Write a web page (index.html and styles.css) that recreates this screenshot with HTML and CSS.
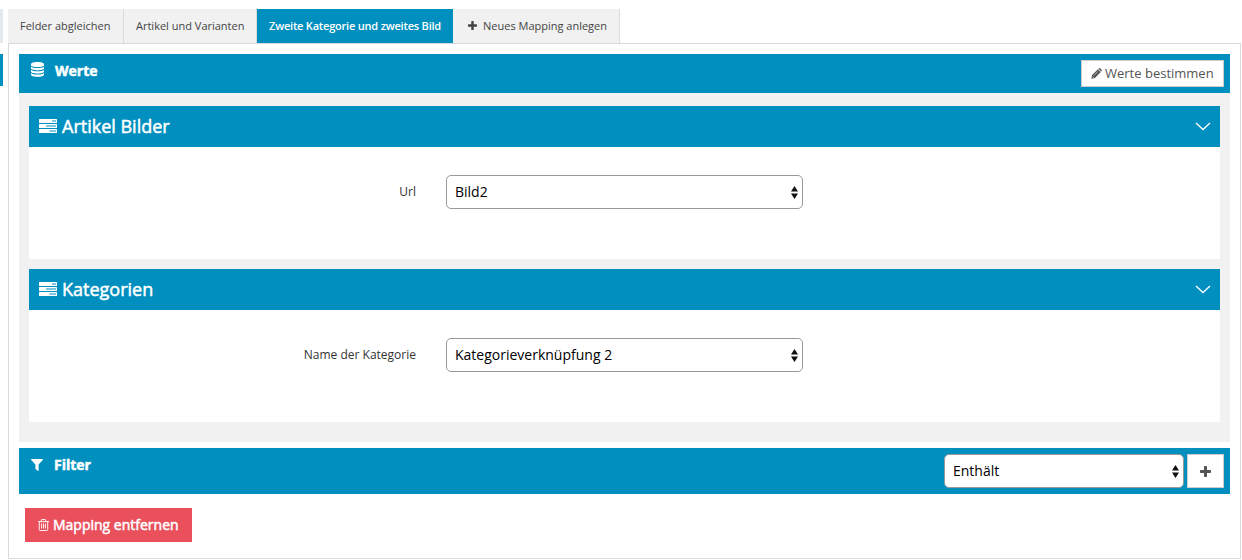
FILE: index.html
```html
<!DOCTYPE html>
<html lang="de">
<head>
<meta charset="utf-8">
<title>Mapping</title>
<link rel="stylesheet" href="styles.css">
</head>
<body>
<svg class="defs" width="0" height="0" aria-hidden="true">
  <symbol id="tasks" viewBox="0 0 18 14"><path fill="currentColor" fill-rule="evenodd" d="M.6 0h16.8q.6 0 .6.6v2.800q0 .6-.6.6H.6Q0 4 0 3.400V.6Q0 0 .6 0zM13 1.400v1.200h4V1.400zM.6 5h16.800q.6 0 .6.6v2.800q0 .6-.6.6H.6Q0 9 0 8.400V5.600Q0 5 .6 5zM7 6.400v1.200h10V6.400zM.6 10h16.800q.6 0 .6.6v2.800q0 .6-.6.6H.6q-.6 0-.6-.6v-2.800Q0 10 .6 10zM10.500 11.400v1.200H17v-1.200z"/></symbol>
  <symbol id="chevron" viewBox="0 0 16 9"><path fill="none" stroke="currentColor" stroke-width="1.300" d="M1 1l7 6.500L15 1"/></symbol>
  <symbol id="plus" viewBox="0 0 11 11"><path fill="currentColor" d="M4.700 0h1.600q.7 0 .7.7V4h3.300q.7 0 .7.700v1.600q0 .7-.7.700H7v3.300q0 .7-.7.700H4.700q-.7 0-.7-.7V7H.7Q0 7 0 6.300V4.700Q0 4 .7 4H4V.7Q4 0 4.700 0z"/></symbol>
  <symbol id="sort" viewBox="0 0 7 13"><path fill="#111" d="M3.500 0L7 5.500H0zM0 7.500h7L3.500 13z"/></symbol>
</svg>
<div class="page">
  <aside class="edge"><div class="edge-tab"></div><div class="edge-bar"></div></aside>
  <main class="main">
    <nav class="tabs">
      <a class="tab tab-1">Felder abgleichen</a>
      <a class="tab tab-2">Artikel und Varianten</a>
      <a class="tab tab-3 active">Zweite Kategorie und zweites Bild</a>
      <a class="tab tab-4"><svg class="tab-plus"><use href="#plus"/></svg>Neues Mapping anlegen</a>
    </nav>
    <section class="panel">
      <header class="bar values-bar">
        <svg class="db" viewBox="0 0 13 15"><path fill="currentColor" d="M0 2.200C0 .9 2.700 0 6.500 0S13 .9 13 2.200v1C13 4.300 10.300 5 6.500 5S0 4.300 0 3.200zM0 4.500c1 1.100 3.500 1.500 6.500 1.500S13 5.600 13 4.500v1.700C13 7.500 10.300 8.200 6.500 8.200S0 7.500 0 6.200zM0 7.700c1 1.100 3.500 1.500 6.500 1.500S13 8.800 13 7.700v1.700c0 1.300-2.700 2-6.500 2S0 10.700 0 9.400zM0 10.900c1 1.100 3.500 1.500 6.500 1.500s5.500-.4 6.500-1.500v1.700c0 1.400-2.700 2.400-6.500 2.400S0 14 0 12.600z"/></svg>
        <h2 class="bar-title">Werte</h2>
        <button class="btn define"><svg class="pencil" viewBox="0 0 12 12"><path fill="currentColor" d="M.3 11.700l.9-4L7.600 1.300l3.100 3.100-6.400 6.400zM8.200.8l.5-.5q.6-.5 1.200 0l1.800 1.800q.5.600 0 1.200l-.5.500z"/><path stroke="#fff" stroke-width=".6" fill="none" d="M3 8.300l4.700-4.700M1.300 9.100l1.600 1.600"/></svg><span>Werte bestimmen</span></button>
      </header>
      <div class="group">
        <section class="card">
          <header class="card-head"><svg class="tasks"><use href="#tasks"/></svg><h3 class="card-title">Artikel Bilder</h3><svg class="chevron"><use href="#chevron"/></svg></header>
          <div class="card-body"><label class="label">Url</label><div class="select field"><span>Bild2</span><svg class="sort"><use href="#sort"/></svg></div></div>
        </section>
        <section class="card">
          <header class="card-head"><svg class="tasks"><use href="#tasks"/></svg><h3 class="card-title">Kategorien</h3><svg class="chevron"><use href="#chevron"/></svg></header>
          <div class="card-body"><label class="label">Name der Kategorie</label><div class="select field"><span>Kategorieverknüpfung 2</span><svg class="sort"><use href="#sort"/></svg></div></div>
        </section>
      </div>
      <header class="bar filter-bar">
        <svg class="funnel" viewBox="0 0 12 12"><path fill="currentColor" d="M.5 0h11q.8.300.3 1L7.600 5.400v6q-.2.900-1 .4L4.600 10q-.2-.2-.2-.5V5.400L.2 1Q-.3.300.5 0z"/></svg>
        <h2 class="bar-title">Filter</h2>
        <div class="select operator"><span>Enthält</span><svg class="sort"><use href="#sort"/></svg></div>
        <button class="btn add"><svg class="add-plus"><use href="#plus"/></svg></button>
      </header>
      <button class="remove"><svg class="trash" viewBox="0 0 11 12"><path fill="none" stroke="currentColor" stroke-width=".9" d="M0 2.600h11M3.300 2.600V1q0-.5.500-.5h3.400q.5 0 .5.500v1.600M1.300 2.600v8q0 .9.900.9h6.600q.9 0 .9-.9v-8M3.600 4.500v5M5.500 4.500v5M7.400 4.500v5"/></svg><span>Mapping entfernen</span></button>
    </section>
  </main>
</div>
</body>
</html>
```
FILE: styles.css
```css
* { box-sizing: border-box; }
body { margin: 0; background: #fff; font-family: "Open Sans", sans-serif; color: #333; }
svg { display: block; flex: none; }
.defs { position: absolute; }
.page { display: flex; gap: 5px; padding-top: 9px; height: 560px; overflow: hidden; }
.edge { width: 3px; display: flex; flex-direction: column; gap: 11px; }
.edge-tab { height: 34px; background: #e2e8ee; }
.edge-bar { height: 32px; background: #008fbe; }
.main { width: 1233px; }
.tabs { display: flex; height: 34px; }
.tab { display: flex; align-items: center; padding: 0 0 2px 12px; height: 34px; background: #f1f1f1; border-right: 1px solid #dadada; font-size: 11px; color: #444; white-space: nowrap; }
.tab-1 { width: 116px; }
.tab-2 { width: 133px; }
.tab-3 { width: 196px; }
.tab-4 { width: 167px; padding-left: 15px; }
.tab.active { background: #008fbe; border: 0; color: #fff; font-weight: 600; letter-spacing: -.2px; }
.tab-plus { width: 9px; height: 9px; margin-right: 6px; }
.panel { height: 516px; padding: 10px; border: 1px solid #dadada; }
.bar { display: flex; align-items: flex-start; background: #008fbe; color: #fff; }
.values-bar { height: 39px; padding: 6px 6px 0 12px; }
.db { width: 13px; height: 15px; margin-top: 2px; }
.bar-title { margin: 0; font-size: 14px; line-height: 20px; font-weight: 700; -webkit-text-stroke: .5px #fff; }
.values-bar .bar-title { margin: 1px 0 0 11px; }
.btn { display: flex; align-items: center; margin: 0; padding: 0; border: 1px solid #ccc; background: #fff; color: #555; font-family: inherit; }
.define { width: 143px; height: 27px; margin-left: auto; padding: 0 0 1px 9px; font-size: 13px; white-space: nowrap; }
.define span { padding-bottom: 1px; }
.pencil { width: 11px; height: 11px; margin-right: 3px; }
.group { height: 349px; padding: 13px 10px 20px; background: #f1f1f1; display: flex; flex-direction: column; gap: 10px; }
.card { height: 153px; background: #fff; }
.card-head { height: 41px; display: flex; align-items: center; padding: 0 10px; background: #008fbe; color: #fff; }
.tasks { width: 18px; height: 14px; margin-bottom: 1px; }
.card-title { margin: 0 0 0 5px; padding-bottom: 2px; font-size: 18px; font-weight: 400; -webkit-text-stroke: .5px #fff; line-height: 24px; }
.chevron { width: 16px; height: 9px; margin-left: auto; margin-right: -1px; }
.card-body { display: flex; align-items: center; height: 90px; }
.label { width: 387px; padding-bottom: 2px; text-align: right; font-size: 12px; }
.select { display: flex; align-items: center; justify-content: space-between; height: 34px; padding: 0 4px 0 8px; background: #fff; border: 1px solid #999; border-radius: 5px; color: #000; font-size: 14px; }
.select span { padding-bottom: 2px; }
.field { width: 357px; margin-left: 30px; }
.sort { width: 7px; height: 13px; }
.filter-bar { height: 46px; margin-top: 6px; padding: 6px 6px 0 12px; }
.funnel { width: 12px; height: 12px; margin-top: 5px; }
.filter-bar .bar-title { margin: 1px 0 0 11px; }
.operator { width: 240px; margin-left: auto; }
.add { width: 37px; height: 34px; margin-left: 3px; justify-content: center; }
.add-plus { width: 11px; height: 11px; }
.remove { display: flex; align-items: center; width: 167px; height: 34px; margin: 14px 0 0 6px; padding: 0 0 0 13px; border: 0; background: #e9505c; color: #fff; font: 14px "Open Sans", sans-serif; -webkit-text-stroke: .5px #fff; white-space: nowrap; }
.remove span { padding-bottom: 2px; }
.trash { width: 11px; height: 12px; margin-right: 4px; }
```
